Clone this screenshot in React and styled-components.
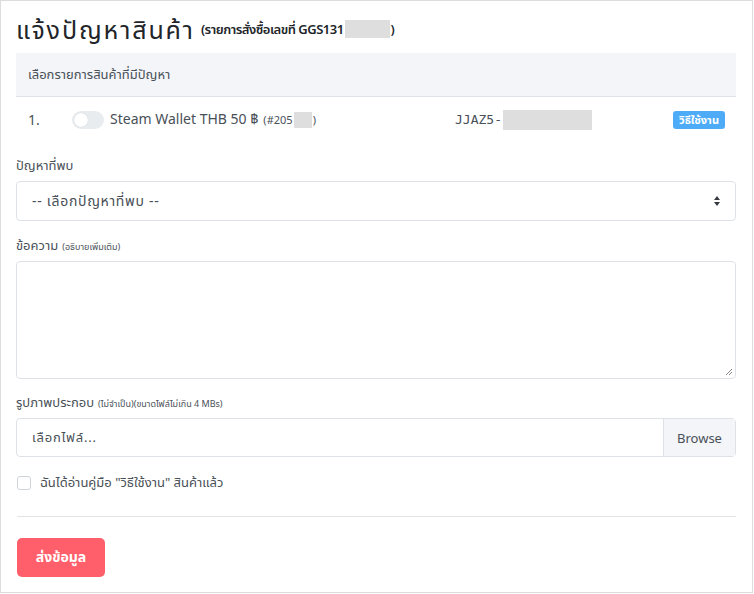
import React from 'react';
import styled, {createGlobalStyle} from 'styled-components';

const Global = createGlobalStyle`
body {
  margin: 0;
  background: #fff;
  font-family: 'Noto Sans', 'Noto Sans Thai', sans-serif;
  color: #495057;
}
* { box-sizing: border-box; }
`

const Page = styled.div`
width: 753px;
height: 593px;
border: 1px solid #dcdcdc;
padding: 13px 16px 0 15px;
`

const Title = styled.h1`
margin: 0 0 9px 0;
font-size: 25px;
font-weight: 400;
letter-spacing: 1.9px;
color: #212529;
line-height: 30px;
display: flex;
align-items: center;
`

const TitleSub = styled.span`
font-size: 13px;
font-weight: 600;
letter-spacing: -0.5px;
margin-left: 6px;
display: flex;
align-items: center;
`

const Redact = styled.span`
display: inline-block;
width: ${p => p.w}px;
height: ${p => p.h || 18}px;
background: #dedede;
margin: 0 1px;
`

const Table = styled.div`
border-bottom: 0;
`

const TableHead = styled.div`
background: #f3f5f9;
height: 44px;
display: flex;
align-items: center;
padding-left: 12px;
font-size: 13px;
color: #495057;
border-bottom: 1px solid #dee2e6;
`

const Row = styled.div`
height: 45px;
display: grid;
grid-template-columns: 44px 38px 345px 1fr auto;
align-items: center;
padding: 0 12px;
font-size: 14px;
`

const Toggle = styled.span`
width: 32px;
height: 18px;
border-radius: 9px;
background: #e9ecef;
position: relative;
&::after {
  content: '';
  position: absolute;
  left: 2px;
  top: 2px;
  width: 14px;
  height: 14px;
  border-radius: 50%;
  background: #fff;
  box-shadow: 0 0 1px rgba(0,0,0,.2);
}
`

const Product = styled.span`
display: flex;
align-items: center;
font-size: 14px;
color: #495057;
`

const Small = styled.span`
font-size: 11px;
margin-left: 5px;
display: flex;
align-items: center;
`

const Code = styled.span`
font-family: 'DejaVu Sans Mono', monospace;
font-size: 13px;
color: #495057;
display: flex;
align-items: center;
`

const Badge = styled.span`
background: #4dabf7;
color: #fff;
font-size: 11px;
font-weight: 700;
line-height: 14px;
padding: 2px 6px;
border-radius: 3px;
margin-right: -1px;
`

const Group = styled.div`
margin-top: ${p => p.mt}px;
`

const Label = styled.div`
font-size: 13px;
color: #495057;
margin-bottom: 7px;
height: 18px;
line-height: 18px;
display: flex;
align-items: baseline;
gap: 4px;
`

const Hint = styled.span`
font-size: 9px;
line-height: 18px;
`

const Select = styled.div`
height: 40px;
border: 1px solid #dee2e6;
border-radius: 4px;
display: flex;
align-items: center;
justify-content: space-between;
padding: 0 14px 0 15px;
font-size: 14px;
letter-spacing: 0.7px;
color: #495057;
`

const Textarea = styled.div`
height: 118px;
border: 1px solid #dee2e6;
border-radius: 4px;
position: relative;
`

const FileBox = styled.div`
height: 39px;
border: 1px solid #dee2e6;
border-radius: 4px;
display: flex;
align-items: stretch;
font-size: 13px;
`

const FileText = styled.div`
flex: 1;
display: flex;
align-items: center;
padding-left: 15px;
letter-spacing: 0.8px;
`

const Browse = styled.div`
width: 72px;
background: #f3f5f9;
border-left: 1px solid #dee2e6;
display: flex;
align-items: center;
justify-content: center;
`

const Check = styled.label`
display: flex;
align-items: center;
gap: 9px;
margin-top: 16px;
margin-left: 1px;
font-size: 13px;
`

const Box = styled.span`
width: 14px;
height: 14px;
border: 1px solid #ced4da;
border-radius: 3px;
`

const Rule = styled.hr`
border: 0;
border-top: 1px solid #e2e4e8;
margin: 23px 0 21px 1px;
`

const Submit = styled.button`
width: 88px;
height: 39px;
background: #ff5f6b;
border: none;
border-radius: 5px;
color: #fff;
font-family: inherit;
font-size: 14px;
font-weight: 700;
margin-left: 1px;
`

const Arrows = () => (
  <svg width="8" height="12" viewBox="0 0 8 12">
    <path d="M4 1 L7 5 H1 Z M4 11 L7 7 H1 Z" fill="#343a40"/>
  </svg>
)

const Grip = () => (
  <svg width="8" height="8" viewBox="0 0 8 8" style={{position: 'absolute', right: 2, bottom: 2}}>
    <path d="M7 1 L1 7 M7 4 L4 7" stroke="#888" strokeWidth="1"/>
  </svg>
)

export default function App() {
  return (
    <Page>
      <Global/>
      <Title>
        แจ้งปัญหาสินค้า
        <TitleSub>(รายการสั่งซื้อเลขที่ GGS131<Redact w={45}/>)</TitleSub>
      </Title>
      <Table>
        <TableHead>เลือกรายการสินค้าที่มีปัญหา</TableHead>
        <Row>
          <span>1.</span>
          <Toggle/>
          <Product>Steam Wallet THB 50 ฿<Small>(#205<Redact w={18} h={16}/>)</Small></Product>
          <Code>JJAZ5-<Redact w={89} h={20}/></Code>
          <Badge>วิธีใช้งาน</Badge>
        </Row>
      </Table>
      <Group mt={14}>
        <Label>ปัญหาที่พบ</Label>
        <Select>-- เลือกปัญหาที่พบ --<Arrows/></Select>
      </Group>
      <Group mt={15}>
        <Label>ข้อความ<Hint>(อธิบายเพิ่มเติม)</Hint></Label>
        <Textarea><Grip/></Textarea>
      </Group>
      <Group mt={14}>
        <Label>รูปภาพประกอบ<Hint>(ไม่จำเป็น)(ขนาดไฟล์ไม่เกิน 4 MBs)</Hint></Label>
        <FileBox>
          <FileText>เลือกไฟล์...</FileText>
          <Browse>Browse</Browse>
        </FileBox>
      </Group>
      <Check><Box/>ฉันได้อ่านคู่มือ "วิธีใช้งาน" สินค้าแล้ว</Check>
      <Rule/>
      <Submit>ส่งข้อมูล</Submit>
    </Page>
  );
}
